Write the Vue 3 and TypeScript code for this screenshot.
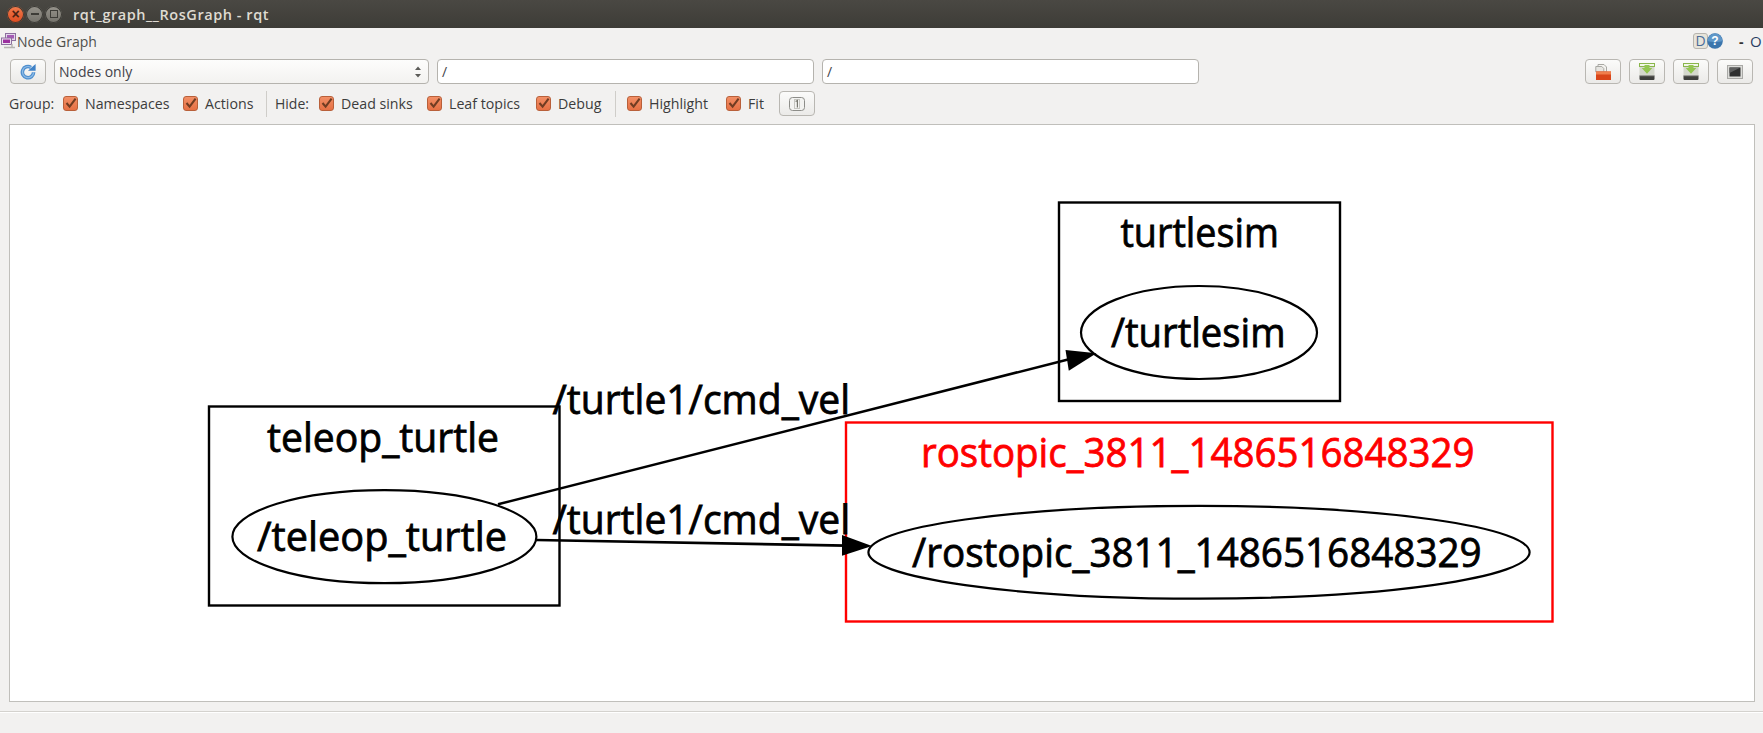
<template>
  <div class="window">
    <header class="titlebar">
      <div class="wm-buttons">
        <span class="wm wm-close">×</span>
        <span class="wm wm-min"><i class="wm-dash"></i></span>
        <span class="wm wm-max"><i class="wm-box"></i></span>
      </div>
      <span class="title">rqt_graph__RosGraph - rqt</span>
    </header>

    <div class="dock-title">
      <svg class="dock-icon" width="16" height="16" viewBox="0 0 16 16">
        <rect x="4.5" y="0.5" width="10" height="7" fill="#e3d8ea" stroke="#8d6f9e" />
        <rect x="6" y="2" width="7" height="3.5" fill="#a45bb5" />
        <rect x="0.5" y="5" width="10" height="6.5" fill="#ece2f0" stroke="#8d6f9e" />
        <rect x="2" y="6.5" width="7" height="3.5" fill="#9c2f9f" />
        <path d="M3 14.5h11M11 11v3.5" stroke="#b5b5b0" stroke-width="1.4" fill="none" />
      </svg>
      <span class="dock-label">Node Graph</span>
      <span class="dock-spacer"></span>
      <span class="d-badge">D</span>
      <svg class="help" width="16" height="16" viewBox="0 0 16 16">
        <circle cx="8" cy="8" r="7.8" fill="#3b75ac" />
        <path d="M.6 8a7.4 7.4 0 0 1 14.8 0c-3 1.5-11 1.5-14.8 0z" fill="#5f97c8" />
        <text x="8" y="12.4" text-anchor="middle" class="help-mark">?</text>
      </svg>
      <span class="dock-dash">-</span>
      <span class="dock-o">O</span>
    </div>

    <div class="toolbar">
      <button class="tool-btn">
        <svg width="16" height="16" viewBox="0 0 16 16">
          <path d="M13.6 8.2a5.6 5.6 0 1 1-2.6-4.8" fill="none" stroke="#4f8fce" stroke-width="3.6" />
          <path d="M13.6 8.2a5.6 5.6 0 1 1-2.6-4.8" fill="none" stroke="#8fbde8" stroke-width="1.2" />
          <path d="M8 6.8h7.6V0z" fill="#3f82c7" />
        </svg>
      </button>
      <div class="combo">
        <span>Nodes only</span>
        <svg class="combo-arrows" width="8" height="16" viewBox="0 0 8 16">
          <path d="M4 2.5 7 6H1zM4 13.5 1 10h6z" fill="#5c5c58" />
        </svg>
      </div>
      <div class="field">/</div>
      <div class="field">/</div>
      <span class="toolbar-spacer"></span>
      <button class="tool-btn">
        <svg width="16" height="16" viewBox="0 0 16 16">
          <path d="M3 .5h6l2.5 2.5V8H3z" fill="#f4f3f0" stroke="#a8a8a3" />
          <path d="M.8 2.5h6l2 2V8h-8z" fill="#e6e5e1" stroke="#a8a8a3" />
          <rect x="1" y="7.5" width="15" height="8.5" fill="#d9461a" />
          <rect x="1" y="7.5" width="15" height="3" fill="#f07f4d" />
        </svg>
      </button>
      <button v-for="n in 2" :key="n" class="tool-btn">
        <svg width="16" height="17" viewBox="0 0 16 17">
          <rect x="0.5" y="3" width="15" height="10" fill="#d5d8cd" />
          <rect x="0.5" y="12.5" width="15" height="4.5" rx="1" fill="#3f3f3d" />
          <rect x="0.5" y="12" width="15" height="1.2" fill="#9a9a96" />
          <rect x="0.5" y="0.5" width="15" height="3" fill="#f2f7e8" stroke="#8ab64c" />
          <path d="M5.5 2h5v3h2.8L8 10.8 2.7 5h2.8z" fill="#93c650" />
        </svg>
      </button>
      <button class="tool-btn">
        <svg width="16" height="14" viewBox="0 0 16 14">
          <rect x="0.5" y="0.5" width="15" height="13" fill="#dcdcd9" stroke="#a9a9a6" />
          <rect x="2.5" y="2.5" width="11" height="9" fill="#2f3030" />
          <path d="M2.5 2.5h11L2.5 8z" fill="#5e5f5f" />
        </svg>
      </button>
    </div>

    <div class="optionbar">
      <template v-for="(group, gi) in optionGroups" :key="gi">
        <span v-if="gi > 0" class="sep" :class="{ 'sep-wide': !group.label }"></span>
        <span v-if="group.label" class="group-label" :style="{ width: group.labelWidth + 'px' }">{{ group.label }}</span>
        <label
          v-for="item in group.items"
          :key="item.name"
          class="check"
          :style="{ width: item.width + 'px' }"
        >
          <span class="box">
            <svg width="13" height="13" viewBox="0 0 13 13">
              <path d="M2.5 6 5.6 9.6 11.6 1.6" fill="none" stroke="#713c22" stroke-width="2.1" />
            </svg>
          </span>
          <span class="check-text">{{ item.name }}</span>
        </label>
      </template>
      <button class="tool-btn">
        <svg width="16" height="16" viewBox="0 0 16 16">
          <rect x="0.5" y="1.5" width="15" height="13" rx="3" fill="#f3f3f1" stroke="#8d8d89" />
          <rect x="5.5" y="3.5" width="5" height="9" fill="none" stroke="#c5c5c0" />
          <path d="M6.6 5.6 8.4 4.6v7" fill="none" stroke="#77776f" stroke-width="1.2" />
        </svg>
      </button>
    </div>

    <main class="graph-view">
      <svg class="graph" width="1763" height="733" viewBox="0 0 1763 733">
        <g class="cluster">
          <rect x="209" y="406.5" width="350.5" height="199" />
          <rect x="1059" y="202.5" width="281" height="198.5" />
        </g>
        <rect class="cluster-red" x="846" y="422.5" width="706.5" height="199" />
        <g class="node">
          <ellipse cx="384.4" cy="536.7" rx="152" ry="46.5" />
          <ellipse cx="1199" cy="332.5" rx="118" ry="46.5" />
          <ellipse cx="1199" cy="552.3" rx="330.6" ry="46.4" />
        </g>
        <g class="edge">
          <line x1="498" y1="504.3" x2="1070" y2="359" />
          <line x1="536.4" y1="540" x2="846" y2="545.6" />
        </g>
        <path class="arrow" d="M1096.5 353.3 1065.5 350 1068.8 370.7z" />
        <path class="arrow" d="M872 546 842 535 842 555.7z" />
        <text
          v-for="t in labels"
          :key="t.text + t.y"
          :x="t.x"
          :y="t.y"
          :textLength="t.w"
          :class="{ 'red-label': t.red }"
          lengthAdjust="spacingAndGlyphs"
        >{{ t.text }}</text>
      </svg>
    </main>

    <footer class="statusbar"></footer>
  </div>
</template>

<script setup lang="ts">
type OptionItem = { name: string; width: number }
type OptionGroup = { label?: string; labelWidth?: number; items: OptionItem[] }
type GraphLabel = { text: string; x: number; y: number; w: number; red?: boolean }

const optionGroups: OptionGroup[] = [
  {
    label: 'Group:',
    labelWidth: 54,
    items: [
      { name: 'Namespaces', width: 120 },
      { name: 'Actions', width: 83 },
    ],
  },
  {
    label: 'Hide:',
    labelWidth: 44,
    items: [
      { name: 'Dead sinks', width: 108 },
      { name: 'Leaf topics', width: 109 },
      { name: 'Debug', width: 79 },
    ],
  },
  {
    items: [
      { name: 'Highlight', width: 99 },
      { name: 'Fit', width: 53 },
    ],
  },
]

// 图上的文字，宽度按参考图量出来
const labels: GraphLabel[] = [
  { text: 'teleop_turtle', x: 267, y: 451.7, w: 232 },
  { text: '/teleop_turtle', x: 257, y: 551, w: 250 },
  { text: '/turtle1/cmd_vel', x: 552.5, y: 414.3, w: 297.5 },
  { text: '/turtle1/cmd_vel', x: 552.5, y: 534, w: 297.5 },
  { text: 'turtlesim', x: 1120.4, y: 247.3, w: 158.6 },
  { text: '/turtlesim', x: 1111, y: 347, w: 174.5 },
  { text: 'rostopic_3811_1486516848329', x: 921, y: 467, w: 553.5, red: true },
  { text: '/rostopic_3811_1486516848329', x: 912, y: 566.7, w: 569.7 },
]
</script>

<style>
html,
body {
  margin: 0;
  background: #f2f1f0;
  overflow: hidden;
}
</style>

<style scoped>
.window {
  width: 1763px;
  height: 733px;
  display: flex;
  flex-direction: column;
  background: #f2f1f0;
  color: #3c3c3c;
  font-family: "Open Sans", "Noto Sans", sans-serif;
  font-size: 14px;
}
.titlebar {
  height: 28px;
  flex: none;
  display: flex;
  align-items: center;
  padding-left: 7px;
  box-sizing: border-box;
  background: linear-gradient(#4a4843, #3d3c37);
}
.wm-buttons {
  display: flex;
  gap: 2px;
  width: 66px;
}
.wm {
  width: 17px;
  height: 17px;
  border-radius: 50%;
  display: flex;
  align-items: center;
  justify-content: center;
  background: linear-gradient(#96938b, #74726b);
  box-shadow: inset 0 0 0 1px #3a3934;
  box-sizing: border-box;
}
.wm-close {
  background: linear-gradient(#f27d4e, #dc4a1f);
  color: #4a2213;
  font: bold 14px "Liberation Sans", sans-serif;
  line-height: 14px;
}
.wm-dash {
  width: 8px;
  height: 2px;
  background: #3d3c37;
}
.wm-box {
  width: 6px;
  height: 6px;
  border: 1px solid #3d3c37;
}
.title {
  color: #dfdbd2;
  font-size: 14.5px;
  font-weight: 600;
  letter-spacing: 0.55px;
}
.dock-title {
  height: 26px;
  flex: none;
  display: flex;
  align-items: center;
}
.dock-icon {
  margin-left: 1px;
}
.dock-label {
  color: #4f4f4b;
}
.dock-spacer,
.toolbar-spacer {
  flex: 1;
}
.d-badge {
  width: 13px;
  height: 14px;
  box-sizing: content-box;
  border: 1px solid #b7b5af;
  border-radius: 3px;
  background: #e7e4da;
  color: #4a6b98;
  line-height: 14px;
  text-align: center;
  font-size: 14px;
  margin-right: -1px;
}
.help-mark {
  font: bold 12px "Liberation Sans", sans-serif;
  fill: #fff;
}
.dock-dash {
  width: 5px;
  margin-left: 16px;
  color: #333;
  font-weight: 700;
}
.dock-o {
  width: 11px;
  margin-left: 6px;
  margin-right: 2px;
  color: #2a3f63;
  font-size: 15px;
}
.toolbar {
  height: 25px;
  flex: none;
  margin-top: 5px;
  padding: 0 10px;
  display: flex;
  align-items: stretch;
  gap: 8px;
}
.tool-btn {
  width: 36px;
  height: 25px;
  box-sizing: border-box;
  padding: 0;
  display: flex;
  align-items: center;
  justify-content: center;
  border: 1px solid #b9b7b2;
  border-radius: 4px;
  background: linear-gradient(#fbfbfa, #ebeae8);
}
.combo,
.field {
  box-sizing: border-box;
  border: 1px solid #b5b3ae;
  border-radius: 4px;
  background: #fff;
  display: flex;
  align-items: center;
  padding: 0 4px;
  color: #43434a;
}
.combo {
  width: 375px;
  justify-content: space-between;
  background: linear-gradient(#fdfdfc, #f3f2f0);
}
.combo-arrows {
  margin-right: 2px;
}
.field {
  width: 377px;
}
.optionbar {
  height: 25px;
  flex: none;
  margin-top: 7px;
  padding-left: 9px;
  display: flex;
  align-items: center;
}
.check {
  display: flex;
  align-items: center;
  gap: 7px;
  white-space: nowrap;
}
.check-text {
  font-size: 14.2px;
}
.box {
  width: 15px;
  height: 15px;
  flex: none;
  box-sizing: border-box;
  display: flex;
  align-items: center;
  justify-content: center;
  border: 1px solid #b9603a;
  border-radius: 3px;
  background: linear-gradient(#f28f66, #e67044);
}
.box svg {
  flex: none;
}
.sep {
  width: 1px;
  height: 26px;
  margin: 0 8px 0 0;
  background: #cfcdc9;
}
.sep-wide {
  margin-right: 11px;
}
.graph-view {
  height: 578px;
  flex: none;
  box-sizing: border-box;
  margin: 8px 8px 0 9px;
  border: 1px solid #c0bfbb;
  background: #fff;
  overflow: hidden;
  position: relative;
}
.graph {
  position: absolute;
  left: -10px;
  top: -125px;
}
.cluster rect {
  fill: none;
  stroke: #000;
  stroke-width: 2.4;
}
.cluster-red {
  fill: none;
  stroke: #f00;
  stroke-width: 2.4;
}
.node ellipse {
  fill: none;
  stroke: #000;
  stroke-width: 2.2;
}
.edge line {
  stroke: #000;
  stroke-width: 2.6;
}
.arrow {
  fill: #000;
}
.graph text {
  font-family: "Open Sans", "Noto Sans", sans-serif;
  font-size: 41px;
  fill: #000;
  stroke: #000;
  stroke-width: 0.8;
}
.graph text.red-label {
  fill: #f00;
  stroke: #f00;
}
.statusbar {
  margin-top: 9px;
  flex: 1;
  border-top: 1px solid #d4d2ce;
  box-shadow: inset 0 1px 0 #fff;
}
</style>
